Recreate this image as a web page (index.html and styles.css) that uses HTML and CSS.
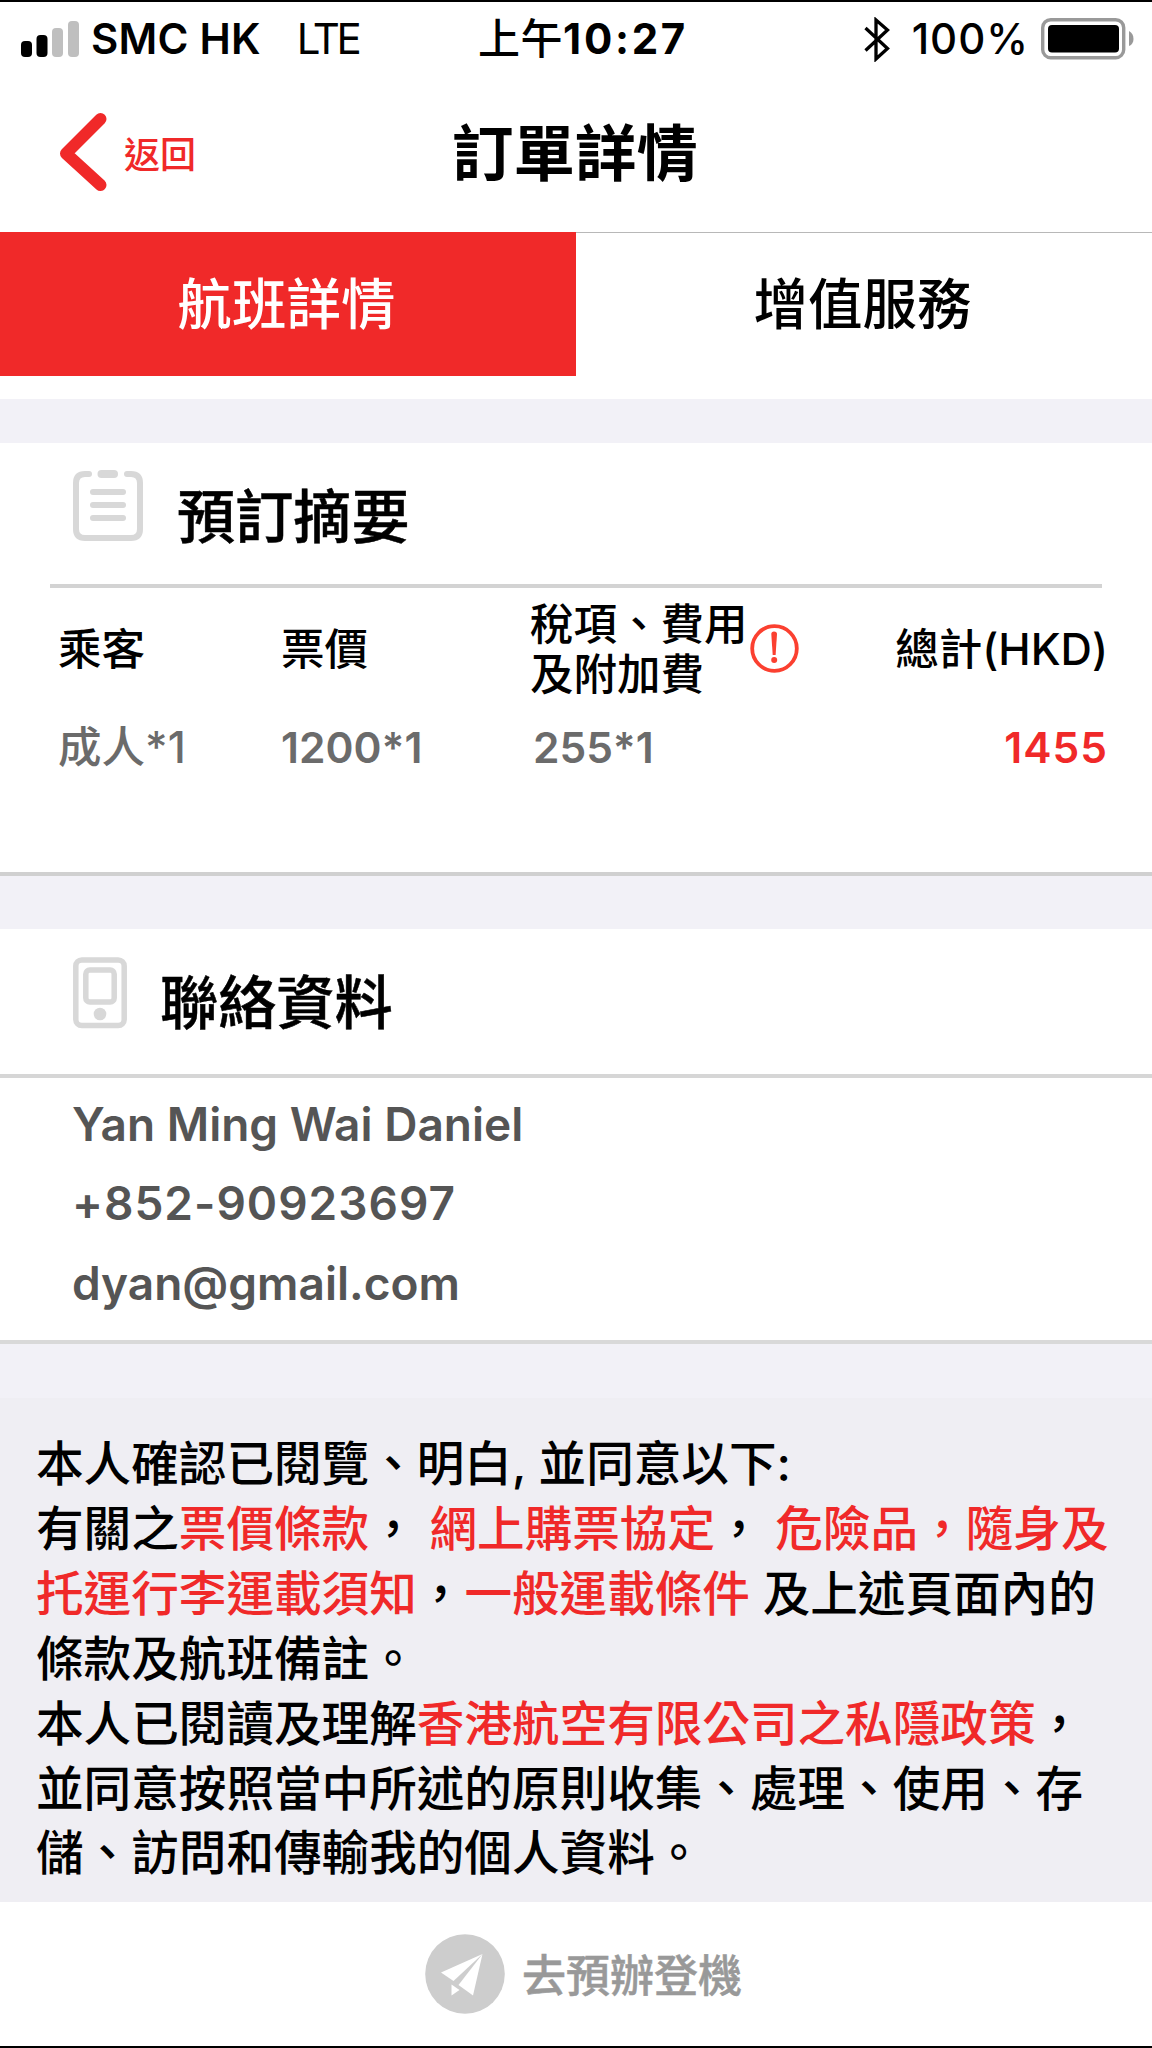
FILE: index.html
```html
<!doctype html>
<html lang="zh-Hant">
  <head>
    <meta charset="UTF-8" />
    <meta name="viewport" content="width=device-width, initial-scale=1.0" />
    <title>訂單詳情</title>
    <link rel="stylesheet" href="styles.css">
  </head>
  <body>
    <div class="screen">
      <div class="status-bar">
        <div class="status-left">
          <svg class="signal" width="58" height="36" viewBox="0 0 58 36">
            <rect x="0" y="20" width="11" height="16" rx="4" fill="#000" />
            <rect x="15.5" y="14" width="11" height="22" rx="4" fill="#000" />
            <rect x="31" y="7" width="11" height="29" rx="4" fill="#bfbfbf" />
            <rect x="47" y="0" width="11" height="36" rx="4" fill="#bfbfbf" />
          </svg>
          <span class="carrier">SMC HK</span>
          <span class="network">LTE</span>
        </div>
        <div class="clock"><span class="ampm">上午</span>10:27</div>
        <div class="status-right">
          <svg class="bluetooth" width="26" height="45" viewBox="0 0 26 45">
            <path d="M1.5 11 L23.5 31.5 L12 42 V3 L23.5 13 L1.5 33.5" fill="none" stroke="#000" stroke-width="3.3" />
          </svg>
          <span class="percent">100%</span>
          <svg class="battery" width="94" height="42" viewBox="0 0 94 42">
            <rect x="1.7" y="1.7" width="81" height="38" rx="8" fill="#fff" stroke="#999" stroke-width="3.4" />
            <rect x="7" y="7" width="71" height="27.5" rx="4" fill="#000" />
            <path d="M88 13 C94 16 94 26 88 28 Z" fill="#999" />
          </svg>
        </div>
      </div>

      <div class="nav">
        <a class="back">
          <svg width="48" height="78" viewBox="0 0 48 78">
            <path d="M41.5 6 L7 40.5 L41.5 72" fill="none" stroke="#f02929" stroke-width="12" stroke-linecap="round" stroke-linejoin="round" />
          </svg>
          <span>返回</span>
        </a>
        <h1>訂單詳情</h1>
      </div>

      <div class="tabs">
        <div class="tab active">航班詳情</div>
        <div class="tab">增值服務</div>
      </div>
      <div class="gap"></div>

      <div class="section summary">
        <div class="section-title">
          <svg width="70" height="72" viewBox="0 0 70 72" fill="none" stroke="#d8d8d8" stroke-linecap="round">
            <path d="M16 4 H12 Q3 4 3 13 V59 Q3 68 12 68 H58 Q67 68 67 59 V13 Q67 4 58 4 H54" stroke-width="6" />
            <path d="M28.5 4 H41" stroke-width="8" />
            <path d="M20 22 H50 M20 35 H50 M20 48 H50" stroke-width="6" />
          </svg>
          <h2>預訂摘要</h2>
        </div>
        <div class="fare-table">
          <div class="th">乘客</div>
          <div class="th">票價</div>
          <div class="th tax">
            <span>稅項、費用<br />及附加費</span>
            <svg width="49" height="49" viewBox="0 0 49 49">
              <circle cx="24.5" cy="24.5" r="22.3" fill="none" stroke="#fb4030" stroke-width="3.8" />
              <path d="M21.3 10 Q21.3 7.5 24 7.5 Q27 7.5 27 10 L25.6 31 H22.7 Z" fill="#fb4030" />
              <circle cx="24.2" cy="36" r="3" fill="#fb4030" />
            </svg>
          </div>
          <div class="th total">總計(HKD)</div>
          <div class="td">成人*1</div>
          <div class="td num">1200*1</div>
          <div class="td num tax-value">255*1</div>
          <div class="td num total price">1455</div>
        </div>
      </div>

      <div class="section contact">
        <div class="section-title">
          <svg width="54" height="72" viewBox="0 0 54 72" fill="none" stroke="#d8d8d8" stroke-width="5.5">
            <rect x="2.8" y="3" width="48.4" height="65.5" rx="6" />
            <rect x="12.8" y="13" width="28.4" height="32" rx="4" />
            <circle cx="27" cy="57" r="6.3" fill="#d8d8d8" stroke="none" />
          </svg>
          <h2>聯絡資料</h2>
        </div>
        <div class="contact-info">
          <div class="name">Yan Ming Wai Daniel</div>
          <div class="phone">+852-90923697</div>
          <div class="email">dyan@gmail.com</div>
        </div>
      </div>

      <div class="terms">
        <p>本人確認已閱覽、明白, 並同意以下:</p>
        <p>有關之<a>票價條款</a>， <a>網上購票協定</a>， <a>危險品，隨身及<br />托運行李運載須知</a>，<a>一般運載條件</a> 及上述頁面內的<br />條款及航班備註。</p>
        <p>本人已閱讀及理解<a>香港航空有限公司之私隱政策</a>，<br />並同意按照當中所述的原則收集、處理、使用、存<br />儲、訪問和傳輸我的個人資料。</p>
      </div>

      <div class="checkin">
        <svg width="80" height="80" viewBox="0 0 80 80">
          <circle cx="40" cy="40" r="39.8" fill="#cdcdcd" />
          <path d="M57.5 20 L16 38.5 L28.5 47 Z" fill="#fff" />
          <path d="M57.5 20 L33.5 51 L48 61.5 Z" fill="#fff" />
          <path d="M26.5 50.5 L34.5 56 L26.5 61.5 Z" fill="#fff" />
        </svg>
        <span>去預辦登機</span>
      </div>
    </div>
  </body>
</html>
```
FILE: styles.css
```css
* {
  box-sizing: border-box;
}
body {
  margin: 0;
  font-family: Inter, "Noto Sans CJK TC", sans-serif;
  font-weight: 500;
  color: #000;
  background: #fff;
}
h1,
h2,
p {
  margin: 0;
}
svg {
  display: block;
  flex: none;
}
.screen {
  width: 1152px;
  height: 2048px;
  border-top: 2px solid #000;
  border-bottom: 2px solid #000;
  overflow: hidden;
  white-space: nowrap;
  background: #f2f1f7;
}
.status-bar,
.nav,
.tabs,
.summary,
.contact {
  background: #fff;
}

/* status bar */
.status-bar {
  height: 74px;
  display: grid;
  grid-template-columns: 1fr auto 1fr;
  padding: 0 17px 0 21px;
  font-size: 42px;
  line-height: 74px;
}
.status-left,
.status-right {
  display: flex;
  align-items: center;
}
.status-right {
  justify-content: flex-end;
}
.carrier {
  margin-left: 12px;
  font-weight: 600;
  letter-spacing: 0.2px;
}
.network {
  margin-left: 36px;
  font-weight: 400;
  letter-spacing: -3.5px;
}
.clock {
  padding-left: 10px;
  font-weight: 700;
  letter-spacing: 2.7px;
}
.ampm {
  font-weight: 500;
  letter-spacing: 0.5px;
}
.percent {
  margin: 0 12px 0 22px;
  letter-spacing: 1px;
}

/* header */
.nav {
  height: 156px;
  display: grid;
  grid-template-columns: 1fr auto 1fr;
  align-items: center;
}
.nav h1 {
  margin-left: -2px;
  font-size: 61.5px;
  font-weight: 700;
  line-height: 80px;
}
.back {
  display: flex;
  align-items: center;
  padding: 0 0 5px 59px;
  font-size: 36px;
  color: #f02929;
}
.back span {
  margin-left: 17px;
}

.tabs {
  height: 167px;
  border-top: 1px solid #b8b8b8;
  display: grid;
  grid-template-columns: 1fr 1fr;
  align-items: start;
}
.tab {
  height: 144px;
  margin-top: -1px;
  padding-right: 3px;
  font-size: 54.5px;
  line-height: 145px;
  text-align: center;
}
.tab.active {
  background: #f02929;
  color: #fff;
}
.gap {
  height: 44px;
}

/* cards */
.section-title {
  display: flex;
}
h2 {
  font-size: 58.2px;
  font-weight: 500;
  line-height: 80px;
  -webkit-text-stroke: 0.5px #000;
}
.summary {
  height: 433px;
  border-bottom: 4px solid #d0d0d0;
}
.summary .section-title {
  height: 145px;
  margin: 0 50px;
  padding: 27px 0 0 23px;
  border-bottom: 4px solid #d3d3d3;
}
.summary h2 {
  margin: 7px 0 0 34px;
}
.fare-table {
  display: grid;
  grid-template-columns: 223px 249px 1fr auto;
  grid-template-rows: 122px 75px;
  align-items: center;
  padding: 0 44px 0 58px;
  font-size: 43.5px;
  font-feature-settings: "calt" 0;
}
.th {
  line-height: 50.5px;
}
.tax {
  display: flex;
  align-items: center;
}
.tax svg {
  margin: -2px 0 0 2px;
}
.td {
  color: #6b6b6b;
  line-height: 75px;
}
.num {
  font-size: 42.5px;
  font-weight: 600;
}
.tax-value {
  padding-left: 3px;
}
.total {
  text-align: right;
}
.price {
  color: #f02929;
  letter-spacing: 1px;
}
.contact {
  margin-top: 53px;
  height: 415px;
  border-bottom: 4px solid #d9d9d9;
}
.contact .section-title {
  height: 149px;
  padding: 28px 0 0 73px;
  border-bottom: 4px solid #d6d6d6;
}
.contact h2 {
  margin: 6px 0 0 33px;
}
.contact-info {
  padding: 7px 0 0 72px;
  font-size: 46px;
  font-weight: 600;
  line-height: 79.3px;
  color: #555;
}
.phone {
  letter-spacing: 1px;
}

.terms {
  margin-top: 54px;
  height: 504px;
  padding: 34px 0 0 36px;
  font-size: 47.6px;
  line-height: 64.9px;
  background: #efeef3;
}
.terms a {
  color: #f02929;
}

.checkin {
  height: 144px;
  display: flex;
  align-items: center;
  justify-content: center;
  padding-left: 15px;
  background: #fff;
  font-size: 44px;
  color: #999;
}
.checkin span {
  margin: -3px 0 0 17px;
  -webkit-text-stroke: 0.5px #999;
}
```
